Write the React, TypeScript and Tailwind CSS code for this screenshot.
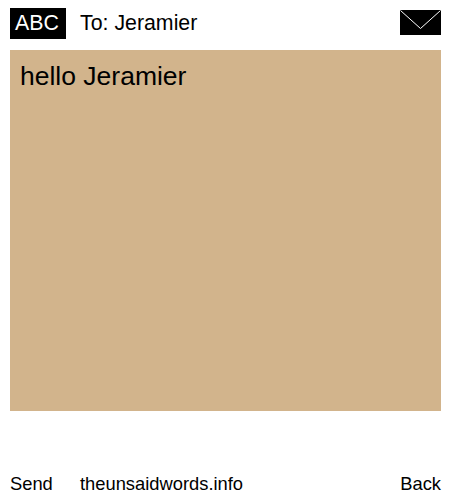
export default function App() {
  return (
    <div className="w-[450px] h-[500px] bg-white text-black pl-[10px] pr-[9px] pt-2 font-['Liberation_Sans',Arial,sans-serif] flex flex-col">
      <div className="flex items-start h-[31px] mb-[11px]">
        <div className="bg-black text-white text-[21.33px] leading-[31px] w-14 h-[31px] pl-[5px]">ABC</div>
        <div className="text-[21.33px] leading-[31px] ml-[14px] flex-1">To: Jeramier</div>
        <svg width="41" height="25" viewBox="0 0 41 25" className="block mt-[2px]">
          <rect width="41" height="25" fill="#000" />
          <path d="M0.5 0.5 L20.5 18.5 L40.5 0.5" stroke="#fff" strokeWidth="1" fill="none" />
        </svg>
      </div>
      <div className="bg-[#d2b48c] h-[361px] px-[10px] py-2 text-[26.5px] leading-[36px]">hello Jeramier</div>
      <div className="flex items-center mt-[59px] text-[18.33px] leading-[27px]">
        <span className="w-[70px]">Send</span>
        <span className="flex-1">theunsaidwords.info</span>
        <span>Back</span>
      </div>
    </div>
  );
}
